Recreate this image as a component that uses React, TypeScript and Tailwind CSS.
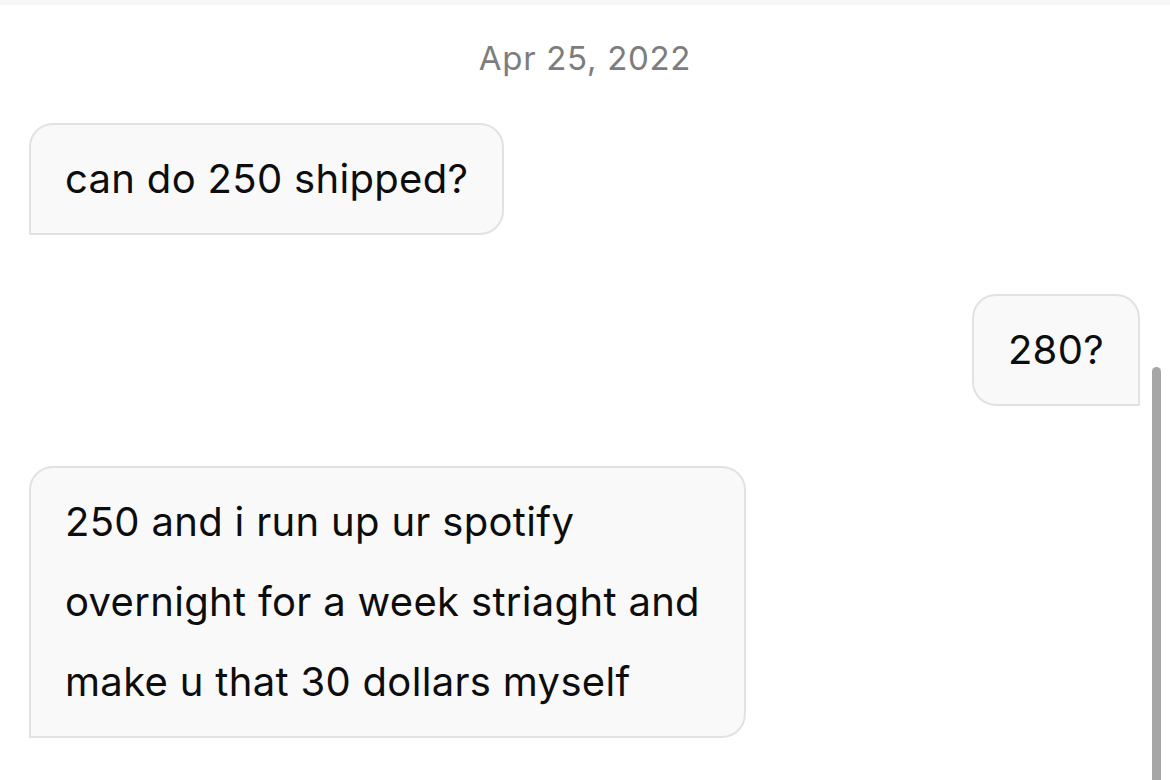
import React from 'react';

type BubbleProps = {
  side: 'left' | 'right';
  children: React.ReactNode;
  className?: string;
};

const Bubble = ({ side, children, className = '' }: BubbleProps) => {
  const corner = side === 'left' ? 'rounded-bl-none ml-[29px] self-start' : 'rounded-br-none mr-[30px] self-end';
  return (
    <div
      className={`border-2 border-[#e2e2e2] bg-[#f9f9f9] rounded-[24px] px-[34px] py-[14px] text-[40px] leading-[80px] tracking-[0.32px] text-[#0d0d0d] ${corner} ${className}`}
    >
      {children}
    </div>
  );
};

export default function App() {
  return (
    <div className="relative w-[1170px] h-[780px] overflow-hidden bg-white font-['Inter',sans-serif]">
      <div className="h-[5px] bg-[#f7f7f7]" />

      <div className="flex flex-col">
        <p className="mt-[34px] text-center text-[33px] leading-[38px] tracking-[0.7px] text-[#7d7d7d]">Apr 25, 2022</p>

        <Bubble side="left" className="mt-[46px]">
          can do 250 shipped?
        </Bubble>

        <Bubble side="right" className="mt-[59px]">
          280?
        </Bubble>

        <Bubble side="left" className="mt-[60px] w-[717px]">
          <span className="block whitespace-nowrap">250 and i run up ur spotify</span>
          <span className="block whitespace-nowrap">overnight for a week striaght and</span>
          <span className="block whitespace-nowrap">make u that 30 dollars myself</span>
        </Bubble>
      </div>

      {/* scroll indicator */}
      <div className="absolute left-[1152px] top-[367px] w-[9px] h-[420px] rounded-full bg-[#a6a6a6]" />
    </div>
  );
}
